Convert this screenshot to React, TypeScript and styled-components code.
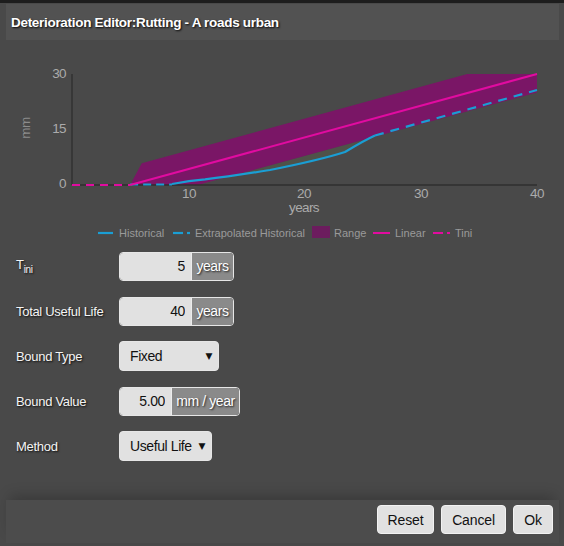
import React from 'react';
import styled, { createGlobalStyle } from 'styled-components';

const GlobalStyle = createGlobalStyle`
  html, body {
    margin: 0;
    padding: 0;
    background: #3a3a3a;
  }
  body {
    font-family: "Liberation Sans", Arial, sans-serif;
  }
`;

const Dialog = styled.div`
  width: 564px;
  height: 546px;
  box-sizing: border-box;
  background: #494949;
  border-top: 3px solid #1d1d1d;
  padding: 1px 5px 3px 6px;
  display: flex;
  flex-direction: column;
`;

const Header = styled.div`
  height: 36px;
  background: #525252;
  display: flex;
  align-items: center;
  padding-left: 5px;
  color: #fff;
  font-weight: bold;
  font-size: 13.5px;
  letter-spacing: -0.3px;
  text-shadow: 1px 1px 2px rgba(0, 0, 0, 0.9);
`;

const ChartSvg = styled.svg`
  display: block;
  width: 553px;
  height: 205px;
  font-family: "Liberation Sans", Arial, sans-serif;
`;

const Form = styled.div`
  display: flex;
  flex-direction: column;
  gap: 15px;
  padding: 6px 0 0 10px;
`;

const Row = styled.div`
  display: grid;
  grid-template-columns: 103px auto;
  align-items: center;
  height: 30px;
`;

const Label = styled.div`
  color: #f4f4f4;
  font-size: 13px;
  letter-spacing: -0.3px;
  white-space: nowrap;
  text-shadow: 1px 1px 2px rgba(0, 0, 0, 0.85);
  sub {
    font-size: 10px;
    vertical-align: -4px;
  }
`;

const InputGroup = styled.div`
  display: inline-flex;
  justify-self: start;
  height: 29px;
  box-sizing: border-box;
  border: 1px solid #e6e6e6;
  border-radius: 4px;
  overflow: hidden;
`;

const Field = styled.input<{ $w: number }>`
  width: ${(p) => p.$w}px;
  box-sizing: border-box;
  border: none;
  outline: none;
  margin: 0;
  background: #e1e1e1;
  color: #111;
  text-align: right;
  padding: 0 6px 0 0;
  font: inherit;
  font-size: 14px;
  letter-spacing: -0.4px;
`;

const Addon = styled.div<{ $w: number }>`
  width: ${(p) => p.$w}px;
  box-sizing: border-box;
  border-left: 1px solid #ececec;
  background: #8a8a8a;
  color: #fff;
  font-size: 14px;
  letter-spacing: -0.4px;
  white-space: nowrap;
  display: flex;
  align-items: center;
  justify-content: center;
  text-shadow: 1px 1px 2px rgba(0, 0, 0, 0.8);
`;

const Select = styled.div<{ $w: number }>`
  width: ${(p) => p.$w}px;
  height: 30px;
  box-sizing: border-box;
  justify-self: start;
  border: 1px solid #e6e6e6;
  border-radius: 4px;
  background: #e1e1e1;
  color: #111;
  font-size: 14px;
  letter-spacing: -0.4px;
  white-space: nowrap;
  display: flex;
  align-items: center;
  justify-content: space-between;
  padding: 0 6px 0 10px;
`;

const Caret = styled.span`
  font-size: 9px;
  color: #111;
  font-family: "DejaVu Sans", sans-serif;
`;

const Footer = styled.div`
  margin-top: auto;
  height: 43px;
  background: #4c4c4c;
  box-shadow: 0 -8px 14px -4px rgba(0, 0, 0, 0.22);
  display: flex;
  justify-content: flex-end;
  align-items: center;
  gap: 7px;
  padding: 0 6px 4px 0;
  box-sizing: border-box;
`;

const Button = styled.button<{ $w: number }>`
  width: ${(p) => p.$w}px;
  height: 29px;
  padding: 0;
  border: 1px solid #f2f2f2;
  border-radius: 4px;
  background: #e1e1e1;
  color: #111;
  font-family: inherit;
  font-size: 14px;
  letter-spacing: -0.15px;
  cursor: pointer;
`;

const X = (t: number) => 72 + 11.625 * t;
const Y = (v: number) => 185 - 3.7 * v;

const Chart = () => {
  const band = [
    [X(5), Y(0)],
    [X(6), Y(5.86)],
    [X(34), Y(30)],
    [X(40), Y(30)],
    [X(40), Y(25)],
    [X(10.83), Y(0)],
  ]
    .map((p) => p.join(','))
    .join(' ');
  const tick = { fill: '#ababab', fontSize: 13.5, letterSpacing: -0.6 };
  const legend = { fill: '#9a9a9a', fontSize: 11 };
  return (
    <ChartSvg viewBox="6 40 553 205">
      <path
        d="M205 183.2 L375 136.8 C 365 140, 355 146, 345 152 C 320 160, 290 166, 270 170 C 245 174, 225 177, 205 179.4 Z"
        fill="rgba(120,140,80,0.14)"
      />
      <polygon points={band} fill="#7a1666" />
      <line x1={72} y1={74} x2={72} y2={185} stroke="#2f2f2f" strokeWidth={1.3} />
      <line x1={72} y1={185} x2={537} y2={185} stroke="#2f2f2f" strokeWidth={1.3} />
      <path d={`M72 185 L${X(5)} 185`} stroke="#e10ba0" strokeWidth={2} strokeDasharray="8 6" fill="none" />
      <path d={`M${X(5)} 184.5 L172 184.5`} stroke="#1a9ed4" strokeWidth={2.2} strokeDasharray="8 5" fill="none" />
      <path
        d="M172 184 C 180 182.5, 192 180.5, 205 179.4 C 225 177, 245 174, 270 170 C 290 166, 320 160, 345 152 C 355 146, 365 140, 375 135.5"
        stroke="#1a9ed4"
        strokeWidth={2.2}
        fill="none"
      />
      <path d="M375 135.5 L537 90" stroke="#1a9ed4" strokeWidth={2.2} strokeDasharray="9 7" fill="none" />
      <line x1={X(5)} y1={Y(0)} x2={X(40)} y2={Y(30)} stroke="#e10ba0" strokeWidth={2} />

      <text x={66} y={78} textAnchor="end" style={tick}>30</text>
      <text x={66} y={133} textAnchor="end" style={tick}>15</text>
      <text x={66} y={188} textAnchor="end" style={tick}>0</text>
      <text x={189} y={198} textAnchor="middle" style={tick}>10</text>
      <text x={304} y={198} textAnchor="middle" style={tick}>20</text>
      <text x={421} y={198} textAnchor="middle" style={tick}>30</text>
      <text x={537} y={198} textAnchor="middle" style={tick}>40</text>
      <text x={304} y={212} textAnchor="middle" style={tick}>years</text>
      <text
        x={25}
        y={128}
        textAnchor="middle"
        dominantBaseline="central"
        transform="rotate(-90 25 128)"
        style={{ fill: '#8c8c8c', fontSize: 13.5, letterSpacing: -0.6 }}
      >
        mm
      </text>

      <line x1={98} y1={233} x2={113} y2={233} stroke="#1a9ed4" strokeWidth={2.2} />
      <text x={119} y={237} style={legend}>Historical</text>
      <line x1={173} y1={233} x2={183} y2={233} stroke="#1a9ed4" strokeWidth={2.2} />
      <line x1={187} y1={233} x2={190} y2={233} stroke="#1a9ed4" strokeWidth={2.2} />
      <text x={195} y={237} style={legend}>Extrapolated Historical</text>
      <rect x={312} y={226} width={18} height={12} fill="#6c1c5e" />
      <text x={334} y={237} style={legend}>Range</text>
      <line x1={373} y1={233} x2={390} y2={233} stroke="#e10ba0" strokeWidth={2} />
      <text x={395} y={237} style={legend}>Linear</text>
      <line x1={433} y1={233} x2={443} y2={233} stroke="#e10ba0" strokeWidth={2} />
      <line x1={447} y1={233} x2={450} y2={233} stroke="#e10ba0" strokeWidth={2} />
      <text x={455} y={237} style={legend}>Tini</text>
    </ChartSvg>
  );
};

export default function App() {
  return (
    <>
      <GlobalStyle />
      <Dialog>
        <Header>Deterioration Editor:Rutting - A roads urban</Header>
        <Chart />
        <Form>
          <Row>
            <Label>
              T<sub>ini</sub>
            </Label>
            <InputGroup>
              <Field $w={71} defaultValue="5" readOnly />
              <Addon $w={42}>years</Addon>
            </InputGroup>
          </Row>
          <Row>
            <Label>Total Useful Life</Label>
            <InputGroup>
              <Field $w={71} defaultValue="40" readOnly />
              <Addon $w={42}>years</Addon>
            </InputGroup>
          </Row>
          <Row>
            <Label>Bound Type</Label>
            <Select $w={100}>
              Fixed <Caret>▼</Caret>
            </Select>
          </Row>
          <Row>
            <Label>Bound Value</Label>
            <InputGroup>
              <Field $w={51} defaultValue="5.00" readOnly />
              <Addon $w={68}>mm / year</Addon>
            </InputGroup>
          </Row>
          <Row>
            <Label>Method</Label>
            <Select $w={93}>
              Useful Life <Caret>▼</Caret>
            </Select>
          </Row>
        </Form>
        <Footer>
          <Button $w={57}>Reset</Button>
          <Button $w={65}>Cancel</Button>
          <Button $w={40}>Ok</Button>
        </Footer>
      </Dialog>
    </>
  );
}
